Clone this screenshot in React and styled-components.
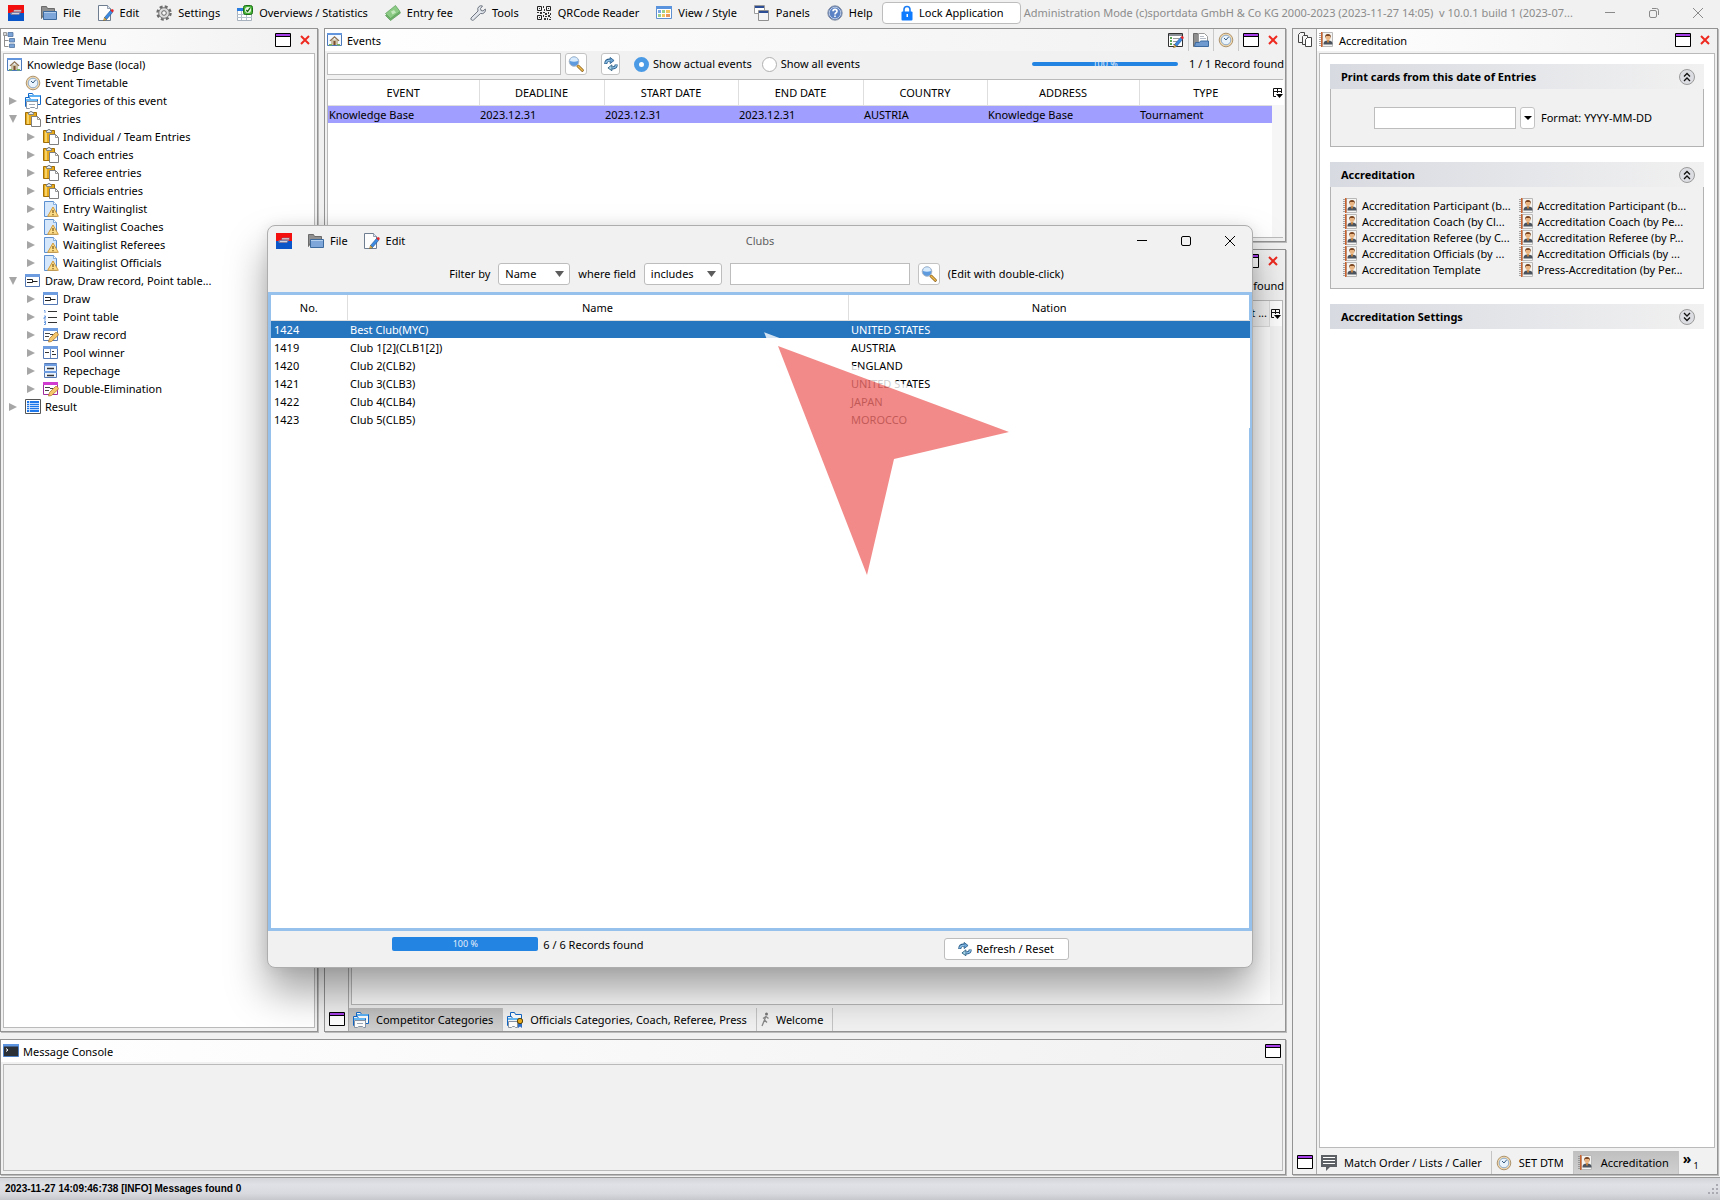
import React from "react";
import styled, { createGlobalStyle } from "styled-components";

/* ---------- icons ---------- */

const Svg = ({ size = 16, children }) => (
  <svg width={size} height={size} viewBox="0 0 16 16" aria-hidden="true">
    {children}
  </svg>
);

const LogoIcon = () => (
  <Svg>
    <path fill="#f40f0f" d="M0 0h16v8H0z" />
    <path fill="#0a55c8" d="M0 8h16v8H0z" />
    <path fill="#a8485a" d="M5 5.500l2-1h7v2.500H5z" />
    <path fill="#c9bcc2" d="M6 5h7v1.500H6z" />
    <path fill="#7f7fa6" d="M2 8l2-1h9l-2 3H3z" />
    <path fill="#d5d5e0" d="M4 8h7v1H4z" />
  </Svg>
);

const FolderIcon = () => (
  <Svg>
    <path fill="#8f8f8f" stroke="#6b6b6b" d="M.5 13.500v-12h5l1 2h7v3h-9z" />
    <path fill="#7ea6d8" stroke="#3c6a9f" d="M2.500 14.500v-8h13v8z" />
    <path stroke="#b4cfee" d="M3 7.500h12" />
  </Svg>
);

const FolderDocIcon = () => (
  <Svg>
    <path fill="#8f8f8f" stroke="#6b6b6b" d="M.5 14.500v-13h4l1 2v9z" />
    <path fill="#fff" stroke="#9a9a9a" d="M5.500 1.500h6l3 3v7h-9z" />
    <path stroke="#b5bcc6" d="M7 4.500h4M7 6.500h6" />
    <path fill="#6f9ad0" stroke="#3c6a9f" d="M1.500 14.500l1-4h4l1-1.500h8v5.500z" />
  </Svg>
);

const Pencil = () => (
  <g>
    <path fill="#3d8be0" stroke="#1d4f92" strokeWidth=".6" d="M6.500 12.500l6-7 2 2-6 7z" />
    <path fill="#e3252c" d="M12.500 5.500l1.300-1.500q2 0 2 2l-1.300 1.500z" />
    <path fill="#f3c65c" stroke="#6b4b10" strokeWidth=".5" d="M6.500 12.500l2 2-3 1.200z" />
  </g>
);

const EditIcon = () => (
  <Svg>
    <path fill="#fdfdfd" stroke="#6f7d90" d="M.5.5h9l3 3v12H.5z" />
    <path fill="#dbe5f1" stroke="#6f7d90" strokeWidth=".7" d="M9.500.5v3h3" />
    <Pencil />
  </Svg>
);

const GearIcon = () => (
  <Svg>
    <circle cx="8" cy="8" r="6.500" fill="none" stroke="#6c6c6c" strokeWidth="2.400" strokeDasharray="2.900 2.200" />
    <circle cx="8" cy="8" r="5.300" fill="#dcdcdc" stroke="#777" />
    <circle cx="8" cy="8" r="2.300" fill="#f7f7f7" stroke="#666" />
  </Svg>
);

const StatsIcon = () => (
  <Svg>
    <path fill="#fff" stroke="#a6b1bd" d="M.5 4.500h14v11H.5z" />
    <path fill="#2a7de0" d="M0 3h8v3H0z" />
    <path stroke="#b3c0cd" d="M0 9.500h15M0 12.500h15M4.500 6v9M9.500 6v9" />
    <rect x="6.500" y=".5" width="9" height="9" rx="2" fill="#47b437" stroke="#1c6d17" />
    <circle cx="11" cy="5" r="3" fill="#e9f8e4" />
    <path fill="none" stroke="#17600f" strokeWidth="1.300" d="M9.300 5l1.300 1.500 2.300-3.300" />
  </Svg>
);

const MoneyIcon = () => (
  <Svg>
    <path fill="#6fb36b" stroke="#559853" strokeWidth=".7" d="M.5 10.500l11-7.500 4 5-10 7.500z" />
    <path fill="#8ccb85" stroke="#5c9f5a" strokeWidth=".7" d="M.5 8.500l10-8 4.500 6-9.500 7z" />
    <path fill="#c4e8bd" d="M6 6.500l3-1.500 2 2.500-3.500 2z" />
  </Svg>
);

const WrenchIcon = () => (
  <Svg>
    <path
      fill="#e2e6ec"
      stroke="#6f7681"
      d="M1 13l7-7q-1-3 1-4.500 1.500-1.300 3.500-.5L10.500 3.500l.5 2 2 .5L15.300 4q.7 2-.8 3.500-1.500 1.700-4 1L3.500 15q-1 .7-2 0-1-1-.5-2z"
    />
  </Svg>
);

const QrIcon = () => (
  <Svg>
    <path fill="none" stroke="#222" d="M1.500 1.500h4v4h-4zM10.500 1.500h4v4h-4zM1.500 10.500h4v4h-4z" />
    <path
      fill="#333"
      d="M3 3h1v1H3zM12 3h1v1h-1zM3 12h1v1H3zM7 1h1v2H7zM8 4h1v2H8zM1 7h2v1H1zM4 7h2v2H4zM7 7h2v1H7zM9 8h2v2H9zM12 7h1v2h-1zM14 8h1v2h-1zM7 10h1v2H7zM9 11h2v1H9zM12 10h2v2h-2zM8 13h2v2H8zM11 13h1v2h-1zM14 12h1v1h-1zM13 14h2v1h-2z"
    />
  </Svg>
);

const GridIcon = () => (
  <Svg>
    <path fill="#fff" stroke="#5f8fce" d="M.5 1.500h15v12H.5z" />
    <path fill="#5a93dd" d="M0 1h16v3H0z" />
    <path fill="#7aa7e6" d="M2 5h3v3H2z" />
    <path fill="#9ad08c" d="M6 5h3v3H6zM2 9h3v3H2z" />
    <path fill="#f3c75f" d="M10 5h4v3h-4zM6 9h3v3H6z" />
    <path fill="#e9955c" d="M10 9h4v3h-4z" />
  </Svg>
);

const PanelsIcon = () => (
  <Svg>
    <path fill="#fff" stroke="#9b9b9b" d="M.5.5h10v8H.5z" />
    <path fill="#2c4d94" d="M1 1h9v2H1z" />
    <path fill="#f4f4f4" stroke="#8f8f8f" d="M4.500 5.500h10v10h-10z" />
    <path fill="#2c4d94" d="M5 6h9v2H5z" />
  </Svg>
);

const HelpIcon = () => (
  <Svg>
    <circle cx="8" cy="8" r="7.200" fill="#4a6fae" stroke="#8c96a8" />
    <circle cx="8" cy="8" r="5.800" fill="#5b82c4" stroke="#e6ecf6" strokeWidth=".7" />
    <path fill="none" stroke="#fff" strokeWidth="1.600" d="M6 6.300q0-1.900 2-1.900t2 1.800q0 1-1 1.600T8 9.500" />
    <path fill="#fff" d="M7.200 10.600h1.600v1.500H7.200z" />
  </Svg>
);

const LockIcon = () => (
  <Svg>
    <path fill="none" stroke="#1a7df5" strokeWidth="1.600" d="M5 7V4.500Q5 1.500 8 1.500t3 3V7" />
    <rect x="2.500" y="6.500" width="11" height="9" rx="1" fill="#0f7bff" />
    <path fill="#fff" d="M7.500 9h1.500v3H7.500z" />
  </Svg>
);

const TreeIcon = () => (
  <Svg>
    <path fill="none" stroke="#8e8e8e" d="M1.500 2v12.500h4M1.500 8.500h4M1.500 3.500h3" />
    <path fill="#d9d9d9" stroke="#888" strokeWidth=".8" d="M.5.5h3v3h-3z" />
    <path fill="#7aa3d8" stroke="#53749f" strokeWidth=".8" d="M5 .5h5v4H5zM6.500 6.500h5v3.500h-5zM6.500 12h5v3.500h-5z" />
  </Svg>
);

const HomeIcon = () => (
  <Svg>
    <path fill="#f4f9ff" stroke="#4b79ba" d="M.5 1.500h14v12H.5z" />
    <path fill="#6295dc" d="M0 1h15v2H0z" />
    <path fill="#c9c0a6" d="M4 7.500h7V13H4z" />
    <path fill="#8f7454" d="M2.500 8.500l5-4.500 5 4.500-1 .7L7.500 5.800 3.500 9.200z" />
    <path fill="#7d4e2c" d="M6.500 9h2v4h-2z" />
    <path fill="#79b65b" d="M2 12h3v1.500H2zM10 12h3v1.500h-3z" />
  </Svg>
);

const ClockIcon = () => (
  <Svg>
    <circle cx="8" cy="8" r="6.800" fill="#f2d9ae" stroke="#a58a63" strokeWidth=".9" />
    <circle cx="8" cy="8" r="4.800" fill="#e9f3fc" stroke="#8caacb" />
    <path fill="none" stroke="#34597f" d="M6 6l2 2 2.500-3" />
  </Svg>
);

const CategoriesIcon = () => (
  <Svg>
    <path fill="#fff" stroke="#1268c8" d="M3.500 11.500v-11h4l1 2h7v9z" />
    <path fill="#5cb1f5" d="M4 2h11v2H4z" />
    <path fill="#f5f8fb" stroke="#1268c8" d="M.5 13.500v-9h4l1 2h7v7z" />
    <path fill="#69bbf7" d="M1 6h11v2H1z" />
    <path fill="#fff" stroke="#8995a5" d="M1.500 8.500h11v7h-2l-1-1h-4l-1 1h-3z" />
    <path stroke="#a0abb9" d="M4 11.500h6" />
  </Svg>
);

const CategoriesBadgeIcon = () => (
  <Svg>
    <path fill="#fff" stroke="#1268c8" d="M3.500 11.500v-11h4l1 2h6v9z" />
    <path fill="#f5f8fb" stroke="#1268c8" d="M.5 13.500v-9h4l1 2h7v7z" />
    <path fill="#69bbf7" d="M1 6h11v2H1z" />
    <path fill="#fff" stroke="#8995a5" d="M1.500 9.500h9v6h-2l-1-1h-2l-1 1h-3z" />
    <path fill="#2f6fc9" d="M11 11h4v5l-2-1.500L11 16z" />
    <circle cx="13" cy="9" r="2.700" fill="#ebae1c" stroke="#4d3908" strokeWidth=".9" />
  </Svg>
);

const ClipboardIcon = () => (
  <Svg>
    <path fill="#e6a91c" stroke="#a06f08" d="M.5 1.500h11v12H.5z" />
    <path fill="#f7d266" d="M2 3h2v10H2z" />
    <path fill="#e8edf2" stroke="#6f7780" strokeWidth=".8" d="M3.500 3.500v-2h1.500V.5h2v1H8.500v2z" />
    <path fill="#fff" stroke="#7f7f7f" d="M6.500 5.500h6l3 3v7h-9z" />
    <path fill="none" stroke="#7f7f7f" strokeWidth=".8" d="M12.500 5.500v3h3" />
  </Svg>
);

const WaitingIcon = () => (
  <Svg>
    <path fill="#d5e7fb" stroke="#5b8fd0" d="M1.500.5h9l3 3v12h-12z" />
    <path fill="#f6fbff" stroke="#5b8fd0" strokeWidth=".7" d="M10.500.5v3h3" />
    <path fill="#fbdc8a" stroke="#cf9a3c" d="M10 6l5.300 9.300H4.700z" />
    <path stroke="#7a5411" strokeWidth="1.200" d="M10 9v3M10 13v1.200" />
  </Svg>
);

const WindowBase = ({ bar = "#6d9de0", edge = "#5478b3" }) => (
  <g>
    <path fill="#fff" stroke={edge} d="M.5 1.500h14v12H.5z" />
    <path fill={bar} d="M0 1h15v3H0z" />
  </g>
);

const GoldPencil = () => (
  <path fill="#f5c76a" stroke="#b07a2c" strokeWidth=".8" d="M5.500 15l1-3.500 6-6q1.500-.5 2.500 1t-.5 2.500l-6 5.500z" />
);

const DrawIcon = () => (
  <Svg>
    <WindowBase />
    <path fill="none" stroke="#222" d="M2 6.500h5.500v3H2M7 8.500h5.500" />
  </Svg>
);

const PointTableIcon = () => (
  <Svg>
    <path stroke="#333" d="M5 2.500h9M5 8.500h9M5 13.500h9" />
    <path fill="none" stroke="#6b9be0" d="M1 1.500h1V4M1 7h1.500v1.500H1V10h2M1 12h1.500v3.500H1M2.500 13.500H1" />
  </Svg>
);

const DrawRecordIcon = () => (
  <Svg>
    <WindowBase />
    <path stroke="#444" strokeWidth="1.200" d="M2 6.500h5M2 9.500h4M7 7.500h3" />
    <GoldPencil />
  </Svg>
);

const DoubleIcon = () => (
  <Svg>
    <WindowBase bar="#cf3ccf" edge="#a02ba0" />
    <path stroke="#444" strokeWidth="1.200" d="M2 6.500h5M2 9.500h4M7 7.500h3" />
    <GoldPencil />
  </Svg>
);

const PoolIcon = () => (
  <Svg>
    <WindowBase />
    <path stroke="#6d8fc4" d="M7.500 4v9" />
    <path stroke="#333" strokeWidth="1.200" d="M2 7.500h4M9 6.500h2M9 9.500h4" />
  </Svg>
);

const RepechageIcon = () => (
  <Svg>
    <path fill="#eaf2fc" stroke="#5478b3" d="M1.500.5h12v14h-12z" />
    <path fill="#6d9de0" d="M1 1h13v2H1zM1 8h13v2H1z" />
    <path stroke="#333" strokeWidth="1.400" d="M4 5.500h7M4 12.500h7" />
  </Svg>
);

const ResultIcon = () => (
  <Svg>
    <path fill="#fff" stroke="#555" d="M.5.5h15v14H.5z" />
    <path fill="#1f78ea" d="M2 2h12v11H2z" />
    <path stroke="#e6f1ff" strokeWidth=".8" d="M2 4.500h12M2 6.500h12M2 8.500h12M2 10.500h12M4.500 2v11" />
  </Svg>
);

const SearchIcon = () => (
  <Svg>
    <path stroke="#8a5f1a" strokeWidth="3" strokeLinecap="round" d="M10 10l4.300 4.300" />
    <path stroke="#f1bd4e" strokeWidth="1.500" strokeLinecap="round" d="M10 10l4.300 4.300" />
    <circle cx="6" cy="5.500" r="4.800" fill="#5d9ade" stroke="#a9b6c6" />
    <path fill="#d8ebfd" d="M2 5q0-3.500 4-3.700Q10 1.500 10 5q-4 1.500-8 0z" />
  </Svg>
);

const RefreshIcon = () => (
  <Svg size={14}>
    <path fill="none" stroke="#1d5584" strokeWidth="3.400" d="M2 8Q2 3.500 7 3.500M14 8.500q0 4-5.500 4" />
    <path fill="#6ba3d6" stroke="#1d5584" strokeWidth=".9" d="M7 .5L11.500 4 7 7.500z" />
    <path fill="#a5d3e6" stroke="#174d70" strokeWidth=".9" d="M9 9l-4.500 3.500L9 15.700z" />
    <path fill="none" stroke="#8fc0e6" strokeWidth="1.600" d="M2 7.500Q2 3.700 7.500 3.700M14 9q0 3.400-5.500 3.400" />
  </Svg>
);

const BadgeIcon = () => (
  <Svg>
    <path fill="#f4f4f2" stroke="#b9b9b9" d="M3.500.5h10v14h-10z" />
    <path fill="#c9622c" d="M2 0h1.500v15H2z" />
    <path stroke="#888" strokeWidth="1.500" strokeDasharray="1 1" d="M1 1v14" />
    <circle cx="9" cy="5.500" r="2.500" fill="#e9b583" />
    <path fill="#7b4420" d="M6 6q-.3-4 3-4t3 4l-1-2H7z" />
    <path fill="#4b545e" d="M4.500 12.500q-.5-4 4.500-4t4.500 4z" />
    <path fill="#d98b3a" d="M8.200 8h1.600v2.500H8.200z" />
  </Svg>
);

const ConsoleIcon = () => (
  <Svg>
    <path fill="#2b2f36" stroke="#4c7fc4" d="M.5 1.500h15v12H.5z" />
    <path fill="#5c94e0" d="M0 1h16v2.500H0z" />
    <path fill="none" stroke="#fff" d="M3 5.500l2 1.500-2 1.500" />
  </Svg>
);

const ChatIcon = () => (
  <Svg>
    <path fill="#5d6166" d="M0 0h16v12H9l-4 4v-4H0z" />
    <path stroke="#fff" d="M2 2.500h12M2 5.500h12M2 8.500h12" />
  </Svg>
);

const RunnerIcon = () => (
  <svg width="8" height="16" viewBox="0 0 8 16" aria-hidden="true">
    <circle cx="5.500" cy="2" r="1.500" fill="#777" />
    <path fill="none" stroke="#888" strokeWidth="1.300" d="M5 4L3.500 8 6 10.500M3.500 8L1 14M2 6.500l3-2 2.500 2" />
  </svg>
);

const PanelMaxIcon = () => (
  <Svg>
    <path fill="#fff" stroke="#000" d="M.5 1.500h15v13H.5z" />
    <path fill="#a63fe8" d="M1 2h14v2H1z" />
    <path stroke="#000" d="M0 4.500h16" />
  </Svg>
);

const PanelCloseIcon = () => (
  <svg width="10" height="10" viewBox="0 0 10 10" aria-hidden="true">
    <path stroke="#ee2a20" strokeWidth="2" d="M1 1l8 8M9 1L1 9" />
  </svg>
);

const CopyIcon = () => (
  <Svg>
    <path fill="#f6f6f6" stroke="#444" d="M3.500.5h4v10h-6v-8z" />
    <path fill="#f6f6f6" stroke="#444" d="M6.500 3.500h4v9h-5v-8z" />
    <path fill="#fff" stroke="#444" d="M10.500 5.500h4v9h-6v-7z" />
  </Svg>
);

const FormEditIcon = () => (
  <Svg>
    <path fill="#fff" stroke="#333" d="M.5 1.500h14v13H.5z" />
    <path fill="#8a8f95" d="M1 2h13v2H1z" />
    <path fill="#59a654" d="M2 5h2v2H2zM2 8h2v2H2zM2 11h2v2H2z" />
    <path stroke="#999" d="M5 6.500h6M5 9.500h4M5 12.500h2" />
    <Pencil />
  </Svg>
);

const ColumnsIcon = () => (
  <svg width="10" height="10" viewBox="0 0 10 10" aria-hidden="true">
    <path fill="none" stroke="#111" d="M3 8.500H.5v-8h8V5M0 3.500h9M4.500 0v5" />
    <path fill="#000" d="M3 6h7L6.500 10z" />
  </svg>
);

const ChevronsIcon = ({ down }) => (
  <Svg>
    <circle cx="8" cy="8" r="7.500" fill="#dcdde2" stroke="#9a9a9a" />
    <path
      fill="none"
      stroke="#111"
      strokeWidth="1.300"
      d={down ? "M5 4l3 3 3-3M5 8.500l3 3 3-3" : "M5 7.500l3-3 3 3M5 12l3-3 3 3"}
    />
  </Svg>
);

const WindowMinIcon = () => (
  <svg width="10" height="10" viewBox="0 0 10 10" aria-hidden="true">
    <path stroke="currentColor" d="M0 4.500h10" />
  </svg>
);

const WindowMaxIcon = ({ restore }) => (
  <svg width="10" height="10" viewBox="0 0 10 10" aria-hidden="true">
    {restore && <path fill="none" stroke="currentColor" d="M3 .5h4.500q2 0 2 2V7" />}
    <rect
      x=".5"
      y={restore ? "2.500" : ".5"}
      width={restore ? "7" : "9"}
      height={restore ? "7" : "9"}
      rx="1.500"
      fill="none"
      stroke="currentColor"
    />
  </svg>
);

const WindowCloseIcon = () => (
  <svg width="10" height="10" viewBox="0 0 10 10" aria-hidden="true">
    <path stroke="currentColor" d="M0 0l10 10M10 0L0 10" />
  </svg>
);

/* ---------- data ---------- */

const menus = [
  [FolderIcon, "File"],
  [EditIcon, "Edit"],
  [GearIcon, "Settings"],
  [StatsIcon, "Overviews / Statistics"],
  [MoneyIcon, "Entry fee"],
  [WrenchIcon, "Tools"],
  [QrIcon, "QRCode Reader"],
  [GridIcon, "View / Style"],
  [PanelsIcon, "Panels"],
  [HelpIcon, "Help"],
];

// [depth, state, icon, label]
const treeRows = [
  [0, null, HomeIcon, "Knowledge Base (local)"],
  [1, null, ClockIcon, "Event Timetable"],
  [1, "closed", CategoriesIcon, "Categories of this event"],
  [1, "open", ClipboardIcon, "Entries"],
  [2, "closed", ClipboardIcon, "Individual / Team Entries"],
  [2, "closed", ClipboardIcon, "Coach entries"],
  [2, "closed", ClipboardIcon, "Referee entries"],
  [2, "closed", ClipboardIcon, "Officials entries"],
  [2, "closed", WaitingIcon, "Entry Waitinglist"],
  [2, "closed", WaitingIcon, "Waitinglist Coaches"],
  [2, "closed", WaitingIcon, "Waitinglist Referees"],
  [2, "closed", WaitingIcon, "Waitinglist Officials"],
  [1, "open", DrawIcon, "Draw, Draw record, Point table..."],
  [2, "closed", DrawIcon, "Draw"],
  [2, "closed", PointTableIcon, "Point table"],
  [2, "closed", DrawRecordIcon, "Draw record"],
  [2, "closed", PoolIcon, "Pool winner"],
  [2, "closed", RepechageIcon, "Repechage"],
  [2, "closed", DoubleIcon, "Double-Elimination"],
  [1, "closed", ResultIcon, "Result"],
];

const eventColumns = [
  ["EVENT", 151, "Knowledge Base"],
  ["DEADLINE", 125, "2023.12.31"],
  ["START DATE", 134, "2023.12.31"],
  ["END DATE", 125, "2023.12.31"],
  ["COUNTRY", 124, "AUSTRIA"],
  ["ADDRESS", 152, "Knowledge Base"],
  ["TYPE", 133, "Tournament"],
];

const clubs = [
  ["1424", "Best Club(MYC)", "UNITED STATES"],
  ["1419", "Club 1[2](CLB1[2])", "AUSTRIA"],
  ["1420", "Club 2(CLB2)", "ENGLAND"],
  ["1421", "Club 3(CLB3)", "UNITED STATES"],
  ["1422", "Club 4(CLB4)", "JAPAN"],
  ["1423", "Club 5(CLB5)", "MOROCCO"],
];

const accreditationLinks = [
  "Accreditation Participant (b...",
  "Accreditation Participant (b...",
  "Accreditation Coach (by Cl...",
  "Accreditation Coach (by Pe...",
  "Accreditation Referee (by C...",
  "Accreditation Referee (by P...",
  "Accreditation Officials (by ...",
  "Accreditation Officials (by ...",
  "Accreditation Template",
  "Press-Accreditation (by Per...",
];

/* ---------- parts ---------- */

const Menus = ({ items }) =>
  items.map(([Icon, label]) => (
    <MenuButton key={label}>
      <Icon />
      {label}
    </MenuButton>
  ));

const PanelButtons = ({ closable = true }) => (
  <>
    <IconButton aria-label="Maximize panel">
      <PanelMaxIcon />
    </IconButton>
    {closable && (
      <IconButton aria-label="Close panel">
        <PanelCloseIcon />
      </IconButton>
    )}
  </>
);

const MainTree = () => (
  <TreePanel>
    <PanelHeader>
      <TreeIcon />
      <PanelTitle>Main Tree Menu</PanelTitle>
      <PanelButtons />
    </PanelHeader>
    <PanelBody>
      <Tree>
        {treeRows.map(([depth, state, Icon, label]) => (
          <TreeRow key={label} $depth={depth}>
            {depth > 0 && (
              <Toggle>
                {state && (
                  <svg width="8" height="8" viewBox="0 0 8 8" aria-hidden="true">
                    <path fill="#a6a6a6" d={state === "open" ? "M0 0h8L4 8z" : "M0 0l8 4-8 4z"} />
                  </svg>
                )}
              </Toggle>
            )}
            <Icon />
            {label}
          </TreeRow>
        ))}
      </Tree>
    </PanelBody>
  </TreePanel>
);

const EventsPanel = () => (
  <EventsBox>
    <PanelHeader>
      <HomeIcon />
      <PanelTitle>Events</PanelTitle>
      <HeaderTools>
        <HeaderTool aria-label="Edit event">
          <FormEditIcon />
        </HeaderTool>
        <HeaderTool aria-label="Open event">
          <FolderDocIcon />
        </HeaderTool>
        <HeaderTool aria-label="Timetable">
          <ClockIcon />
        </HeaderTool>
      </HeaderTools>
      <PanelButtons />
    </PanelHeader>
    <EventsToolbar>
      <TextInput $width={234} aria-label="Search events" />
      <SquareButton aria-label="Search">
        <SearchIcon />
      </SquareButton>
      <RefreshSquare aria-label="Refresh">
        <RefreshIcon />
      </RefreshSquare>
      <RadioLabel>
        <Radio type="radio" name="events" defaultChecked />
        Show actual events
      </RadioLabel>
      <RadioLabel>
        <Radio type="radio" name="events" />
        Show all events
      </RadioLabel>
      <Spacer />
      <ThinProgress>100 %</ThinProgress>
      <span>1 / 1 Record found</span>
    </EventsToolbar>
    <TableFrame>
      <TableArea>
        <Table>
          <colgroup>
            {eventColumns.map(([name, width]) => (
              <col key={name} width={width} />
            ))}
          </colgroup>
          <thead>
            <tr>
              {eventColumns.map(([name]) => (
                <Th key={name}>{name}</Th>
              ))}
            </tr>
          </thead>
          <tbody>
            <EventRow>
              {eventColumns.map(([name, , value]) => (
                <Td key={name} $pad={1}>
                  {value}
                </Td>
              ))}
            </EventRow>
          </tbody>
        </Table>
      </TableArea>
      <Gutter>
        <GutterButton aria-label="Choose columns">
          <ColumnsIcon />
        </GutterButton>
      </Gutter>
    </TableFrame>
  </EventsBox>
);

const CategoriesPanel = () => (
  <CategoriesBox>
    <SideStrip>
      <span />
      <IconButton aria-label="Maximize categories">
        <PanelMaxIcon />
      </IconButton>
    </SideStrip>
    <StackColumn>
      <PanelHeader>
        <PanelTitle />
        <PanelButtons />
      </PanelHeader>
      <FoundLine>found</FoundLine>
      <TableFrame>
        <TableArea>
          <CutHeading>t ...</CutHeading>
        </TableArea>
        <Gutter>
          <GutterButton aria-label="Choose category columns">
            <ColumnsIcon />
          </GutterButton>
        </Gutter>
      </TableFrame>
      <Tabs>
        <Tab $active>
          <CategoriesIcon />
          Competitor Categories
        </Tab>
        <Tab>
          <CategoriesBadgeIcon />
          Officials Categories, Coach, Referee, Press
        </Tab>
        <Tab>
          <RunnerIcon />
          Welcome
        </Tab>
      </Tabs>
    </StackColumn>
  </CategoriesBox>
);

const Section = ({ title, closed, children }) => (
  <SectionBox>
    <SectionHead>
      <SectionTitle>{title}</SectionTitle>
      <IconButton aria-label={title}>
        <ChevronsIcon down={closed} />
      </IconButton>
    </SectionHead>
    {children}
  </SectionBox>
);

const AccreditationPanel = () => (
  <AccreditationBox>
    <SideStrip>
      <IconButton aria-label="Stacked panels">
        <CopyIcon />
      </IconButton>
      <IconButton aria-label="Maximize accreditation">
        <PanelMaxIcon />
      </IconButton>
    </SideStrip>
    <StackColumn>
      <PanelHeader>
        <BadgeIcon />
        <PanelTitle>Accreditation</PanelTitle>
        <PanelButtons />
      </PanelHeader>
      <SectionList>
        <Section title="Print cards from this date of Entries">
          <DateBody>
            <TextInput $width={142} id="card-date" />
            <DropButton aria-label="Pick a date">
              <svg width="8" height="4" viewBox="0 0 8 4" aria-hidden="true">
                <path d="M0 0h8L4 4z" />
              </svg>
            </DropButton>
            <label htmlFor="card-date">Format: YYYY-MM-DD</label>
          </DateBody>
        </Section>
        <Section title="Accreditation">
          <LinkGrid>
            {accreditationLinks.map((label, i) => (
              <CardLink key={i} href="#">
                <BadgeIcon />
                {label}
              </CardLink>
            ))}
          </LinkGrid>
        </Section>
        <Section title="Accreditation Settings" closed />
      </SectionList>
      <Tabs>
        <Tab>
          <ChatIcon />
          Match Order / Lists / Caller
        </Tab>
        <Tab>
          <ClockIcon />
          SET DTM
        </Tab>
        <Tab $active>
          <BadgeIcon />
          Accreditation
        </Tab>
        <MoreTabs aria-label="More tabs">
          <b>»</b>
          <sub>1</sub>
        </MoreTabs>
      </Tabs>
    </StackColumn>
  </AccreditationBox>
);

const Choice = ({ id, width, value }) => (
  <SelectWrap $width={width}>
    <Select id={id} defaultValue={value}>
      <option>{value}</option>
    </Select>
    <svg width="9" height="6" viewBox="0 0 9 6" aria-hidden="true">
      <path fill="#5c5c5c" d="M0 0h9L4.500 6z" />
    </svg>
  </SelectWrap>
);

const ClubsDialog = () => (
  <Dialog role="dialog" aria-label="Clubs">
    <DialogBar>
      <DialogMenus>
        <LogoIcon />
        <Menus items={menus.slice(0, 2)} />
      </DialogMenus>
      <DialogTitle>Clubs</DialogTitle>
      <DialogControls>
        <WindowButton aria-label="Minimize dialog">
          <WindowMinIcon />
        </WindowButton>
        <WindowButton aria-label="Maximize dialog">
          <WindowMaxIcon />
        </WindowButton>
        <WindowButton aria-label="Close dialog">
          <WindowCloseIcon />
        </WindowButton>
      </DialogControls>
    </DialogBar>
    <FilterBar>
      <label htmlFor="filter-by">Filter by</label>
      <Choice id="filter-by" width={72} value="Name" />
      <label htmlFor="filter-mode">where field</label>
      <Choice id="filter-mode" width={78} value="includes" />
      <TextInput $width={180} aria-label="Filter text" />
      <SquareButton aria-label="Apply filter">
        <SearchIcon />
      </SquareButton>
      <span>(Edit with double-click)</span>
    </FilterBar>
    <ClubsFrame>
      <Table>
        <colgroup>
          <col width="76" />
          <col width="501" />
          <col width="402" />
        </colgroup>
        <thead>
          <tr>
            <Th>No.</Th>
            <Th>Name</Th>
            <Th>Nation</Th>
          </tr>
        </thead>
        <tbody>
          {clubs.map((club, i) => (
            <ClubRow key={club[0]} $selected={i === 0}>
              {club.map((value) => (
                <Td key={value} $pad={3}>
                  {value}
                </Td>
              ))}
            </ClubRow>
          ))}
        </tbody>
      </Table>
    </ClubsFrame>
    <DialogFooter>
      <FooterCell>
        <Progress>100 %</Progress>
        <span>6 / 6 Records found</span>
      </FooterCell>
      <FooterCell>
        <ResetButton>
          <RefreshIcon />
          Refresh / Reset
        </ResetButton>
      </FooterCell>
    </DialogFooter>
    <Pointer width="260" height="270" viewBox="0 0 260 270" aria-hidden="true">
      <g opacity=".8">
        <path
          fill="#ef6e6c"
          stroke="#fff"
          strokeWidth="16"
          strokeMiterlimit="10"
          paintOrder="stroke"
          d="M20 20L251 106 136 133 109 249z"
        />
      </g>
    </Pointer>
  </Dialog>
);

const App = () => (
  <Page>
    <GlobalStyle />
    <MenuBar>
      <LogoIcon />
      <Menus items={menus} />
      <LockButton>
        <LockIcon />
        Lock Application
      </LockButton>
      <AppTitle>
        Administration Mode (c)sportdata GmbH &amp; Co KG 2000-2023 (2023-11-27 14:05)&nbsp; v 10.0.1 build 1 (2023-07...
      </AppTitle>
      <MainControls>
        <WindowButton aria-label="Minimize">
          <WindowMinIcon />
        </WindowButton>
        <WindowButton aria-label="Restore">
          <WindowMaxIcon restore />
        </WindowButton>
        <WindowButton aria-label="Close">
          <WindowCloseIcon />
        </WindowButton>
      </MainControls>
    </MenuBar>
    <Workspace>
      <LeftArea>
        <UpperArea>
          <MainTree />
          <CenterColumn>
            <EventsPanel />
            <CategoriesPanel />
          </CenterColumn>
        </UpperArea>
        <ConsoleBox>
          <PanelHeader $end={4}>
            <ConsoleIcon />
            <PanelTitle>Message Console</PanelTitle>
            <PanelButtons closable={false} />
          </PanelHeader>
          <ConsoleBody />
        </ConsoleBox>
      </LeftArea>
      <AccreditationPanel />
    </Workspace>
    <StatusBar>
      2023-11-27 14:09:46:738 [INFO] Messages found 0
      <svg width="12" height="12" viewBox="0 0 12 12" aria-hidden="true">
        <path fill="#aaabb2" d="M9 1h2v2H9zM9 5h2v2H9zM5 5h2v2H5zM9 9h2v2H9zM5 9h2v2H5zM1 9h2v2H1z" />
      </svg>
    </StatusBar>
    <ClubsDialog />
  </Page>
);

export default App;

/* ---------- styles ---------- */

const GlobalStyle = createGlobalStyle`
  * {
    box-sizing: border-box;
  }

  body {
    margin: 0;
    background: #f1f1f1;
  }

  body, button, input, select {
    font-family: "Noto Sans", "Open Sans", sans-serif;
    font-size: 11px;
    line-height: 16px;
    color: #000;
  }

  button {
    display: flex;
    align-items: center;
    justify-content: center;
    padding: 0;
    border: 0;
    background: none;
    white-space: nowrap;
  }

  svg {
    display: block;
    flex: none;
  }
`;

const Page = styled.div`
  position: relative;
  display: flex;
  flex-direction: column;
  min-height: 100vh;
  white-space: nowrap;
`;

const MenuBar = styled.header`
  display: flex;
  align-items: center;
  gap: 17px;
  height: 28px;
  padding: 0 0 2px 8px;
`;

const MenuButton = styled.button`
  gap: 6px;
`;

const LockButton = styled.button`
  gap: 4px;
  width: 139px;
  height: 22px;
  margin-left: -8px;
  border: 1px solid #bdbdbd;
  border-radius: 4px;
  background: #fff;
`;

const AppTitle = styled.div`
  flex: 1;
  min-width: 0;
  margin: 0 -14px;
  color: #8c8c8c;
`;

const MainControls = styled.div`
  display: flex;
  color: #8a8a8a;
`;

const WindowButton = styled.button`
  width: 44px;
  height: 24px;
  color: inherit;
`;

const Workspace = styled.main`
  flex: 1;
  display: grid;
  grid-template-columns: 1fr 426px;
  gap: 6px;
  padding: 0 2px 2px 0;
`;

const LeftArea = styled.div`
  display: flex;
  flex-direction: column;
  gap: 7px;
  min-width: 0;
`;

const UpperArea = styled.div`
  flex: 1;
  display: flex;
  gap: 6px;
`;

const CenterColumn = styled.div`
  flex: 1;
  display: flex;
  flex-direction: column;
  gap: 7px;
  min-width: 0;
`;

const Panel = styled.section`
  display: flex;
  flex-direction: column;
  border: 1px solid #939393;
  background: #f1f1f1;
  box-shadow: 1px 1px 0 #bcbcbc;
`;

const TreePanel = styled(Panel)`
  width: 318px;
`;

const EventsBox = styled(Panel)`
  height: 214px;
`;

const CategoriesBox = styled(Panel)`
  flex: 1;
  flex-direction: row;
`;

const AccreditationBox = styled(Panel)`
  flex-direction: row;
`;

const ConsoleBox = styled(Panel)`
  height: 136px;
`;

const PanelHeader = styled.div`
  display: flex;
  align-items: center;
  height: 22px;
  margin-bottom: 2px;
  padding: 0 ${({ $end = 7 }) => $end}px 0 2px;
  background: linear-gradient(90deg, #fff, #f1f1f1);
  gap: 9px;
`;

const PanelTitle = styled.div`
  flex: 1;
  margin-left: -5px;
  padding-top: 1px;
`;

const IconButton = styled.button`
  height: 16px;
`;

const HeaderTools = styled.div`
  display: flex;
  margin-right: -5px;
`;

const HeaderTool = styled(IconButton)`
  width: 25px;
  height: 22px;
  border-right: 1px solid #c9c9c9;
`;

const PanelBody = styled.div`
  flex: 1;
  margin: 0 2px 3px;
  border: 1px solid #bababa;
  background: #fff;
`;

const ConsoleBody = styled(PanelBody)`
  background: #f1f1f1;
`;

const Tree = styled.ul`
  margin: 0;
  padding: 2px 3px;
  list-style: none;
`;

const TreeRow = styled.li`
  display: flex;
  align-items: center;
  gap: 4px;
  height: 18px;
  padding-left: ${({ $depth }) => ($depth > 1 ? 18 : 0)}px;
`;

const Toggle = styled.span`
  width: 14px;
  padding-left: 2px;
`;

const EventsToolbar = styled.div`
  display: flex;
  align-items: center;
  height: 22px;
  gap: 4px;
  margin: 0 1px 4px 2px;
`;

const TextInput = styled.input`
  width: ${({ $width }) => $width}px;
  height: 22px;
  padding: 0 4px;
  border: 1px solid #bdbdbd;
  background: #fff;
`;

const SquareButton = styled.button`
  width: 22px;
  height: 22px;
  border: 1px solid #c3c3c3;
  border-radius: 3px;
  background: #fff;
`;

const RefreshSquare = styled(SquareButton)`
  width: 19px;
  margin: 0 10px;
`;

const RadioLabel = styled.label`
  display: flex;
  align-items: center;
  gap: 4px;
  margin-right: 6px;
`;

const Radio = styled.input`
  appearance: none;
  width: 15px;
  height: 15px;
  margin: 0;
  border: 1px solid #b0b0b0;
  border-radius: 50%;
  background: #fff;

  &:checked {
    border: 5px solid #4a9ae6;
  }
`;

const Spacer = styled.div`
  flex: 1;
`;

const Progress = styled.div`
  width: 146px;
  height: 14px;
  border-radius: 2px;
  background: #2384e2;
  color: #e4eefa;
  font-size: 9px;
  line-height: 14px;
  text-align: center;
`;

const ThinProgress = styled(Progress)`
  height: 4px;
  margin-right: 7px;
  line-height: 4px;
`;

const TableFrame = styled.div`
  flex: 1;
  display: flex;
  margin: 0 2px 3px;
  border: 1px solid #bababa;
  background: #fff;
`;

const TableArea = styled.div`
  flex: 1;
`;

const Gutter = styled.div`
  width: 12px;
  background: #f6f6f6;
`;

const GutterButton = styled.button`
  width: 12px;
  height: 25px;
  background: #fff;
`;

const Table = styled.table`
  width: 100%;
  table-layout: fixed;
  border-collapse: collapse;
`;

const Th = styled.th`
  height: 25px;
  padding: 1px 0 0;
  border-right: 1px solid #dedede;
  border-bottom: 1px solid #dedede;
  font-weight: 400;

  &:last-child {
    border-right: 0;
  }
`;

const Td = styled.td`
  height: 18px;
  padding: 1px 0 0 ${({ $pad }) => $pad}px;
`;

const EventRow = styled.tr`
  background: #a09fff;
`;

const ClubRow = styled.tr`
  background: ${({ $selected }) => ($selected ? "#2675bf" : "#fff")};
  color: ${({ $selected }) => ($selected ? "#fff" : "#000")};
`;

const SideStrip = styled.div`
  display: flex;
  flex-direction: column;
  align-items: center;
  justify-content: space-between;
  width: 24px;
  padding: 3px 0 4px;
  border-right: 1px solid #ababab;
`;

const StackColumn = styled.div`
  flex: 1;
  display: flex;
  flex-direction: column;
  min-width: 0;
`;

const FoundLine = styled.div`
  height: 26px;
  padding: 4px 1px;
  text-align: right;
`;

const CutHeading = styled.div`
  height: 26px;
  padding: 4px 2px 0;
  border-right: 1px solid #dedede;
  border-bottom: 1px solid #dedede;
  background: #f6f6f6;
  text-align: right;
`;

const Tabs = styled.div`
  display: flex;
  height: 23px;
`;

const Tab = styled.button`
  gap: 7px;
  height: 23px;
  padding: 0 9px 0 4px;
  border-right: 1px solid #c4c4c4;
  background: ${({ $active }) => ($active ? "linear-gradient(#bfbfbf, #d0d0d0)" : "none")};
`;

const MoreTabs = styled.button`
  padding-left: 4px;
  gap: 2px;

  b {
    padding-bottom: 8px;
    font-size: 14px;
  }

  sub {
    font-size: 9px;
    vertical-align: baseline;
    padding-top: 6px;
  }
`;

const SectionList = styled(PanelBody)`
  display: flex;
  flex-direction: column;
  gap: 15px;
  padding: 10px;
`;

const SectionBox = styled.section`
  background: #f1f1f1;
`;

const SectionHead = styled.div`
  display: flex;
  align-items: center;
  justify-content: space-between;
  height: 25px;
  padding: 0 9px 0 11px;
  background: linear-gradient(90deg, #d8dae1, #f1f1f1);
`;

const SectionTitle = styled.h2`
  margin: 0;
  font-size: 11px;
  font-weight: 700;
`;

const DateBody = styled.div`
  display: flex;
  align-items: center;
  height: 58px;
  padding-left: 43px;
  gap: 4px;
  border: 1px solid #b3b3b3;
  border-top: 0;
`;

const DropButton = styled.button`
  width: 15px;
  height: 22px;
  margin-right: 2px;
  border: 1px solid #c3c3c3;
  border-radius: 3px;
  background: #fff;
`;

const LinkGrid = styled.div`
  display: grid;
  grid-template-columns: 1fr 1fr;
  padding: 11px 9px 10px 12px;
  border: 1px solid #b3b3b3;
  border-top: 0;
`;

const CardLink = styled.a`
  display: flex;
  gap: 3px;
  height: 16px;
  overflow: hidden;
  color: #000;
  text-decoration: none;
`;

const StatusBar = styled.footer`
  display: flex;
  align-items: center;
  justify-content: space-between;
  height: 23px;
  padding: 0 1px 0 5px;
  border-top: 1px solid #999;
  background: linear-gradient(#d3d4d9, #e0e1e7 30%, #d9dae0 70%, #c6c7cd);
  font-family: "Liberation Sans", sans-serif;
  font-size: 10px;
  font-weight: 700;
`;

const Dialog = styled.div`
  position: absolute;
  top: 225px;
  right: 467px;
  bottom: 232px;
  left: 267px;
  display: flex;
  flex-direction: column;
  border: 1px solid #adadad;
  border-radius: 8px;
  background: #f1f1f1;
  box-shadow: 0 24px 40px rgba(0, 0, 0, 0.36), 0 0 14px rgba(0, 0, 0, 0.08);
`;

const DialogBar = styled.div`
  display: grid;
  grid-template-columns: 1fr auto 1fr;
  align-items: center;
  height: 29px;
`;

const DialogMenus = styled.div`
  display: flex;
  gap: 16px;
  padding-left: 8px;
`;

const DialogTitle = styled.div`
  color: #5f5f5f;
`;

const DialogControls = styled.div`
  display: flex;
  justify-content: flex-end;
`;

const FilterBar = styled.div`
  display: flex;
  align-items: center;
  justify-content: center;
  gap: 8px;
  height: 37px;
  padding-right: 7px;
`;

const SelectWrap = styled.div`
  display: grid;
  align-items: center;
  width: ${({ $width }) => $width}px;

  > * {
    grid-area: 1 / 1;
  }

  svg {
    justify-self: end;
    margin-right: 6px;
    pointer-events: none;
  }
`;

const Select = styled.select`
  appearance: none;
  width: 100%;
  height: 22px;
  padding: 0 6px;
  border: 1px solid #bdbdbd;
  border-radius: 3px;
  background: #fff;
`;

const ClubsFrame = styled.div`
  flex: 1;
  border: 3px solid #96c1ec;
  background: #fff;
`;

const DialogFooter = styled.div`
  display: grid;
  grid-template-columns: 1fr 1fr;
  height: 36px;
  padding-top: 6px;
`;

const FooterCell = styled.div`
  display: flex;
  align-items: flex-start;
  justify-content: center;
  gap: 5px;

  &:first-child {
    padding-left: 8px;
  }
`;

const ResetButton = styled.button`
  gap: 4px;
  width: 125px;
  height: 22px;
  margin-top: 1px;
  border: 1px solid #bdbdbd;
  border-radius: 3px;
  background: #fff;
`;

const Pointer = styled.svg`
  position: absolute;
  top: 100px;
  left: 490px;
  pointer-events: none;
`;
